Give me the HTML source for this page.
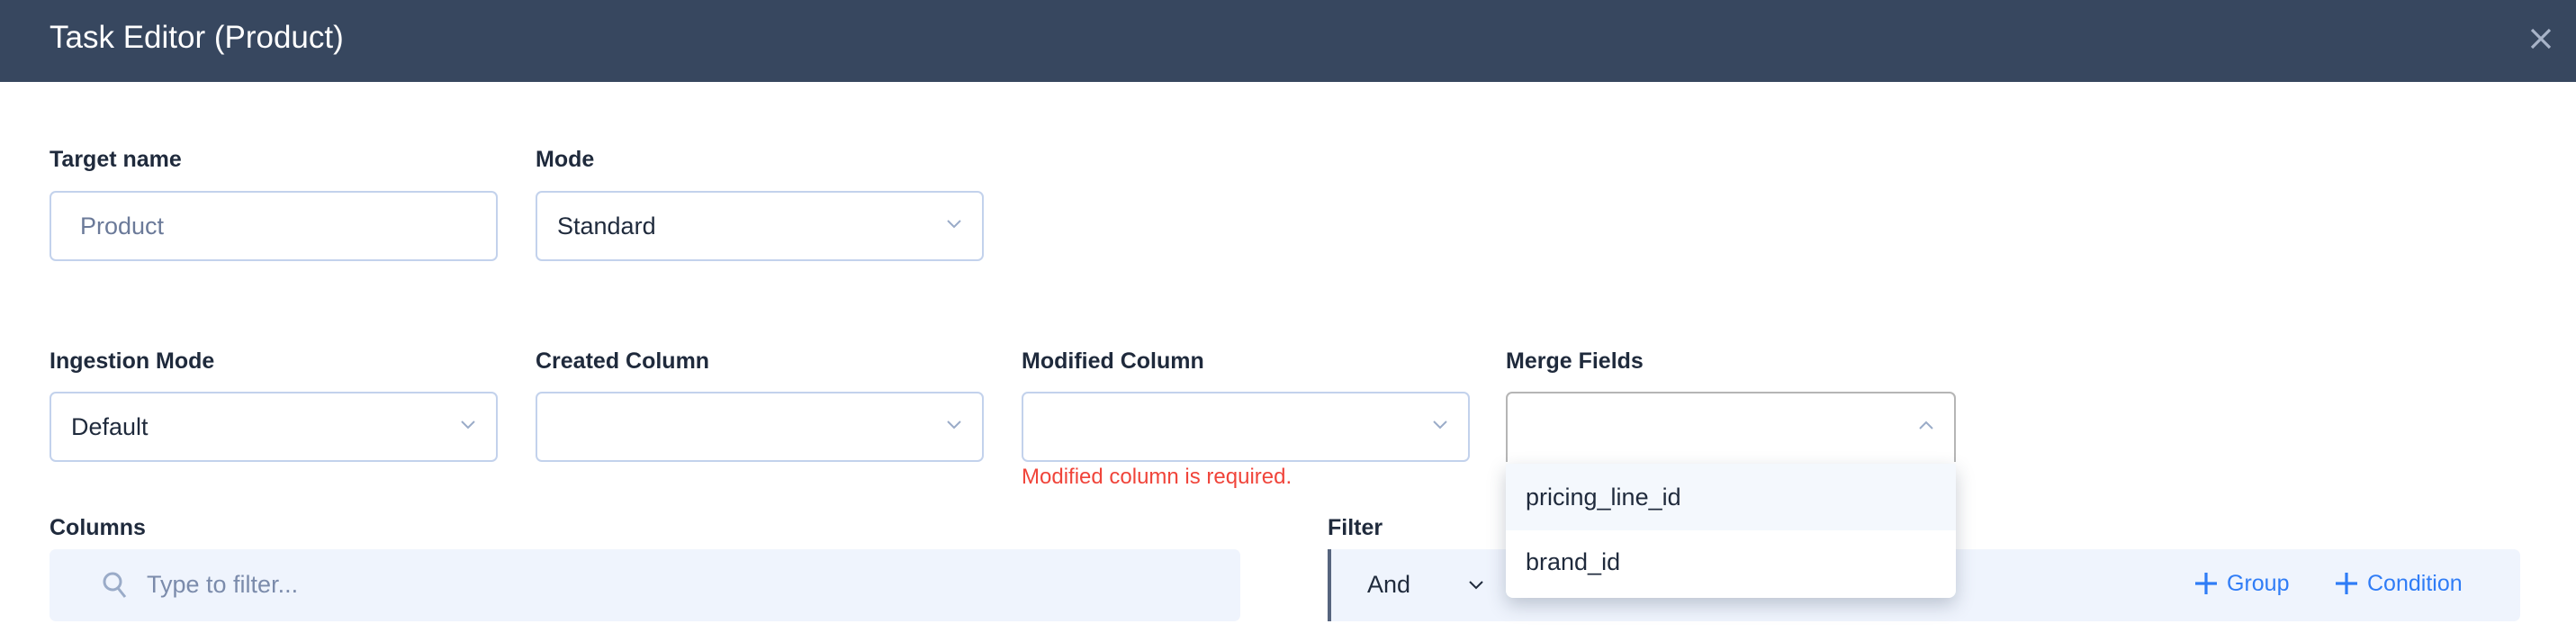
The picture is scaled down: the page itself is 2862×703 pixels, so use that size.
<!DOCTYPE html>
<html><head><meta charset="utf-8"><style>
*{box-sizing:border-box;margin:0;padding:0}
body{width:2862px;height:703px;overflow:hidden;background:#fff;font-family:"Liberation Sans",sans-serif;position:relative;color:#1f2a3c}
.hdr{position:absolute;left:0;top:0;width:2862px;height:91px;background:#37475f}
.title{position:absolute;left:55px;top:22px;font-size:35px;color:#fff}
.lbl{position:absolute;font-size:25px;font-weight:bold;color:#1f2a3c}
.inp{position:absolute;height:78px;border:2px solid #c3d2ec;border-radius:7px;background:#fff;font-size:27px;line-height:74px;padding-left:22px}
.chev{position:absolute;right:22px;top:28px}
.err{position:absolute;left:1135px;top:516px;font-size:24px;color:#f0443a}
.box{position:absolute;background:#eff4fd;border-radius:7px}
.blue{position:absolute;top:634px;font-size:25px;color:#2f7cf6}
</style></head><body>
<div class="hdr"><div class="title">Task Editor (Product)</div>
<svg style="position:absolute;left:2811px;top:31px" width="24" height="24" viewBox="0 0 24 24"><path d="M2 2L22 22M22 2L2 22" stroke="#a7b3c8" stroke-width="3.2"/></svg></div>

<div class="lbl" style="left:55px;top:163px">Target name</div>
<div class="lbl" style="left:595px;top:163px">Mode</div>
<div class="inp" style="left:55px;top:212px;width:498px;color:#6b7a99;padding-left:32px">Product</div>
<div class="inp" style="left:595px;top:212px;width:498px">Standard<svg class="chev" width="18" height="14" viewBox="0 0 18 14"><path d="M2 3L9 10L16 3" fill="none" stroke="#9aabc8" stroke-width="2"/></svg></div>

<div class="lbl" style="left:55px;top:387px">Ingestion Mode</div>
<div class="lbl" style="left:595px;top:387px">Created Column</div>
<div class="lbl" style="left:1135px;top:387px">Modified Column</div>
<div class="lbl" style="left:1673px;top:387px">Merge Fields</div>
<div class="inp" style="left:55px;top:435px;width:498px">Default<svg class="chev" width="18" height="14" viewBox="0 0 18 14"><path d="M2 3L9 10L16 3" fill="none" stroke="#9aabc8" stroke-width="2"/></svg></div>
<div class="inp" style="left:595px;top:435px;width:498px"><svg class="chev" width="18" height="14" viewBox="0 0 18 14"><path d="M2 3L9 10L16 3" fill="none" stroke="#9aabc8" stroke-width="2"/></svg></div>
<div class="inp" style="left:1135px;top:435px;width:498px"><svg class="chev" width="18" height="14" viewBox="0 0 18 14"><path d="M2 3L9 10L16 3" fill="none" stroke="#9aabc8" stroke-width="2"/></svg></div>
<div class="inp" style="left:1673px;top:435px;width:500px;border-color:#b5b5b5;border-bottom:none;border-radius:7px 7px 0 0"><svg class="chev" width="18" height="14" viewBox="0 0 18 14"><path d="M2 11L9 4L16 11" fill="none" stroke="#9aabc8" stroke-width="2"/></svg></div>
<div class="err">Modified column is required.</div>

<div class="lbl" style="left:55px;top:572px">Columns</div>
<div class="lbl" style="left:1475px;top:572px">Filter</div>
<div class="box" style="left:55px;top:610px;width:1323px;height:80px">
<svg style="position:absolute;left:58px;top:24px" width="30" height="32" viewBox="0 0 30 32"><circle cx="12" cy="12" r="9" fill="none" stroke="#9aabc8" stroke-width="3"/><path d="M18 19L26 29" stroke="#9aabc8" stroke-width="3"/></svg>
<div style="position:absolute;left:108px;top:24px;font-size:27px;color:#7b8bab">Type to filter...</div></div>
<div class="box" style="left:1475px;top:610px;width:1325px;height:80px;border-left:4px solid #56647e;border-radius:0 7px 7px 0">
<div style="position:absolute;left:40px;top:24px;font-size:27px;color:#1f2a3c">And</div>
<svg style="position:absolute;left:152px;top:33px" width="18" height="14" viewBox="0 0 18 14"><path d="M2 3L9 10L16 3" fill="none" stroke="#1f2a3c" stroke-width="2"/></svg></div>
<svg style="position:absolute;left:2438px;top:635px" width="26" height="26" viewBox="0 0 26 26"><path d="M13 1V25M1 13H25" stroke="#2f7cf6" stroke-width="3.2"/></svg>
<div class="blue" style="left:2474px">Group</div>
<svg style="position:absolute;left:2594px;top:635px" width="26" height="26" viewBox="0 0 26 26"><path d="M13 1V25M1 13H25" stroke="#2f7cf6" stroke-width="3.2"/></svg>
<div class="blue" style="left:2630px">Condition</div>

<div style="position:absolute;left:1673px;top:515px;width:500px;height:149px;background:#fff;border-radius:0 0 8px 8px;box-shadow:0 8px 20px rgba(40,55,80,.25);overflow:hidden">
<div style="height:74px;background:#f4f8fd;font-size:27px;line-height:74px;padding-left:22px">pricing_line_id</div>
<div style="height:75px;font-size:27px;line-height:70px;padding-left:22px">brand_id</div></div>
</body></html>
